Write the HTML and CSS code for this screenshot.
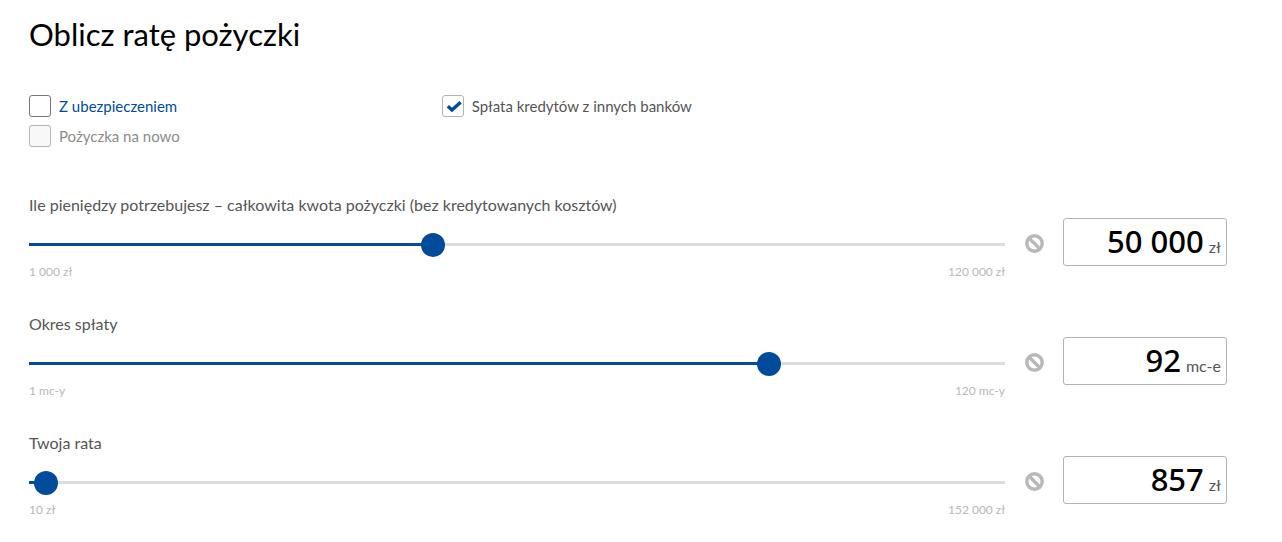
FILE: index.html
```html
<!DOCTYPE html>
<html lang="pl">
<head>
    <meta charset="UTF-8">
    <meta name="viewport" content="width=device-width, initial-scale=1.0">
    <title>Oblicz ratę pożyczki</title>
    <link rel="stylesheet" href="styles.css">
</head>
<body>
    <form class="calculator">
        <h1>Oblicz ratę pożyczki</h1>

        <!-- Loan options -->
        <div class="options">
            <label class="option option-link"><input type="checkbox">Z ubezpieczeniem</label>
            <label class="option"><input type="checkbox" checked>Spłata kredytów z innych banków</label>
            <label class="option option-disabled"><input type="checkbox" disabled>Pożyczka na nowo</label>
        </div>

        <!-- Amount -->
        <div class="field">
            <div class="field-slider">
                <label for="amount">Ile pieniędzy potrzebujesz – całkowita kwota pożyczki (bez kredytowanych kosztów)</label>
                <input type="range" id="amount" min="1000" max="120000" value="50000" style="--fill: 41%">
                <div class="scale"><span>1 000 zł</span><span>120 000 zł</span></div>
            </div>
            <button type="button" class="lock" aria-label="Zablokuj kwotę">
                <svg viewBox="0 0 19 19"><circle cx="9.5" cy="9.5" r="7.7"/><path d="M4.2 4.2l10.6 10.6"/></svg>
            </button>
            <div class="value-box">
                <input type="text" value="50 000" aria-label="Kwota pożyczki">
                <span>zł</span>
            </div>
        </div>

        <!-- Period -->
        <div class="field">
            <div class="field-slider">
                <label for="period">Okres spłaty</label>
                <input type="range" id="period" min="1" max="120" value="92" style="--fill: 76%">
                <div class="scale"><span>1 mc-y</span><span>120 mc-y</span></div>
            </div>
            <button type="button" class="lock" aria-label="Zablokuj okres">
                <svg viewBox="0 0 19 19"><circle cx="9.5" cy="9.5" r="7.7"/><path d="M4.2 4.2l10.6 10.6"/></svg>
            </button>
            <div class="value-box">
                <input type="text" value="92" aria-label="Okres spłaty w miesiącach">
                <span>mc-e</span>
            </div>
        </div>

        <!-- Instalment -->
        <div class="field">
            <div class="field-slider">
                <label for="rate">Twoja rata</label>
                <input type="range" id="rate" min="10" max="152000" value="857" style="--fill: 1%">
                <div class="scale"><span>10 zł</span><span>152 000 zł</span></div>
            </div>
            <button type="button" class="lock" aria-label="Zablokuj ratę">
                <svg viewBox="0 0 19 19"><circle cx="9.5" cy="9.5" r="7.7"/><path d="M4.2 4.2l10.6 10.6"/></svg>
            </button>
            <div class="value-box">
                <input type="text" value="857" aria-label="Wysokość raty">
                <span>zł</span>
            </div>
        </div>
    </form>
</body>
</html>
```
FILE: styles.css
```css
* {
    box-sizing: border-box;
}

body {
    margin: 0;
    background-color: #fff;
    color: #555;
    font-family: Lato, sans-serif;
    font-size: 16px;
}

.calculator {
    padding: 12px 55px 12px 29px;
}

h1 {
    margin: 0;
    font-size: 31px;
    font-weight: 400;
    line-height: 44px;
    color: #000;
}

/* Checkboxes */
.options {
    display: grid;
    grid-template-columns: repeat(3, 1fr);
    gap: 8px 40px;
    margin: 39px 0 46px;
}

.option {
    display: flex;
    align-items: center;
    gap: 8px;
    grid-column: 1;
    font-size: 15px;
    line-height: 22px;
}

.option:nth-child(2) {
    grid-column: 2;
}

.option-link {
    color: #004c9a;
}

.option-disabled {
    color: #8c8c8c;
}

.option input {
    appearance: none;
    width: 22px;
    height: 22px;
    margin: 0;
    border: 1px solid #767676;
    border-radius: 3px;
    background-color: #fff;
}

.option input:checked {
    border-color: #b3b3b3;
    background: url("data:image/svg+xml,%3Csvg xmlns='http://www.w3.org/2000/svg' viewBox='0 0 20 20'%3E%3Cpath d='M4.8 10.2l4.2 3.8 8.6-7.8' fill='none' stroke='%23004c9a' stroke-width='3.4'/%3E%3C/svg%3E");
}

.option input:disabled {
    border-color: #b3b3b3;
    background-color: #f8f8f8;
}

/* Slider rows */
.field {
    display: flex;
    align-items: flex-start;
    margin-bottom: 30px;
}

.field:last-child {
    margin-bottom: 0;
}

.field-slider {
    flex: 1;
}

.field-slider label {
    display: block;
    line-height: 24px;
}

.field-slider input {
    appearance: none;
    display: block;
    width: 100%;
    height: 24px;
    margin: 15px 0 5px;
    background: none;
    cursor: pointer;
}

.field-slider input::-webkit-slider-runnable-track {
    height: 3px;
    background: linear-gradient(to right, #004c9a var(--fill), #dcdcdc var(--fill));
}

.field-slider input::-webkit-slider-thumb {
    appearance: none;
    width: 24px;
    height: 24px;
    margin-top: -10px;
    border-radius: 50%;
    background-color: #004c9a;
}

.scale {
    display: flex;
    justify-content: space-between;
    font-size: 12px;
    line-height: 21px;
    color: #b8b8b8;
}

.lock {
    width: 19px;
    height: 19px;
    margin: 41px 19px 0 20px;
    padding: 0;
    border: 0;
    background: none;
    cursor: pointer;
}

.lock svg {
    display: block;
    fill: none;
    stroke: #b8b8b8;
    stroke-width: 3.4;
}

.value-box {
    display: flex;
    align-items: baseline;
    gap: 5px;
    width: 164px;
    height: 48px;
    margin-top: 25px;
    padding: 0 5px;
    border: 1px solid #b3b3b3;
    border-radius: 3px;
}

.value-box input {
    flex: 1;
    min-width: 0;
    height: 44px;
    padding: 0;
    border: 0;
    background: none;
    font-family: "Noto Sans", sans-serif;
    font-size: 31px;
    font-weight: 500;
    text-align: right;
    color: #000;
}
```
